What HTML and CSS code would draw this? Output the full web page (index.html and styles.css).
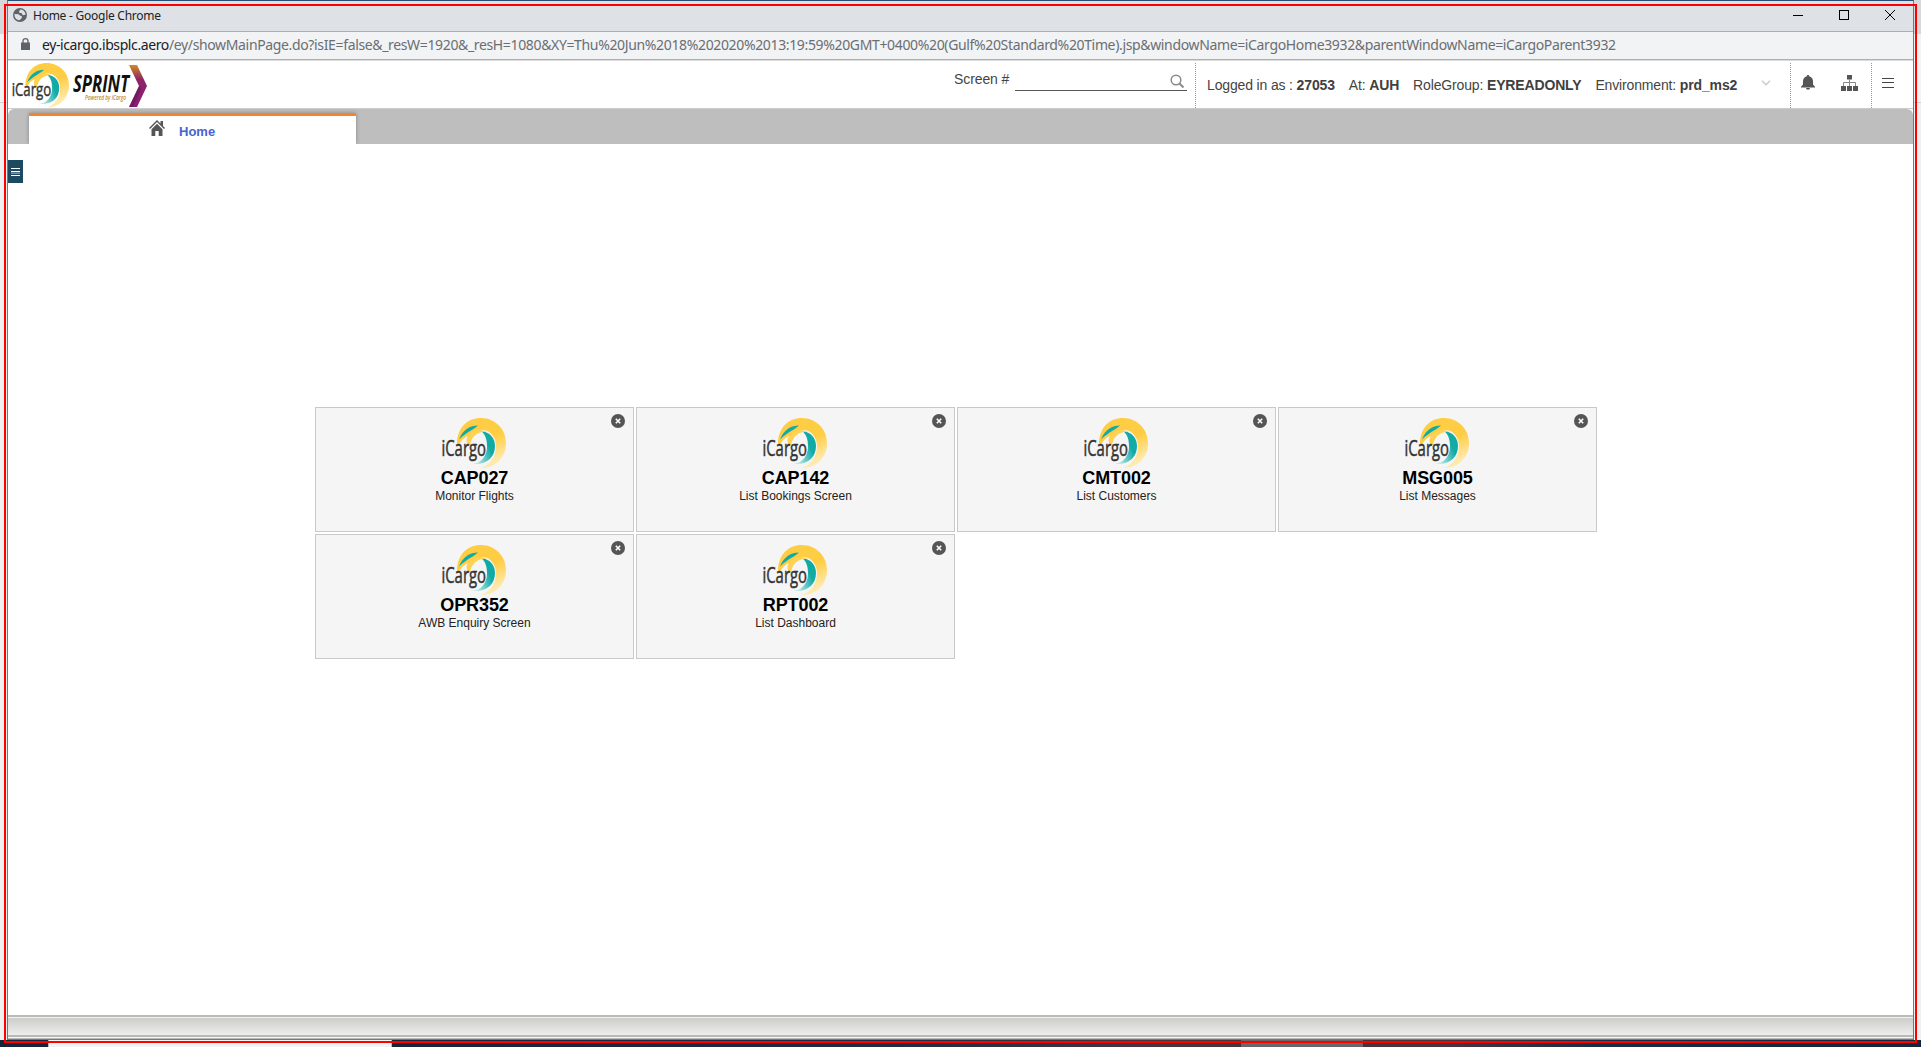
FILE: index.html
```html
<!DOCTYPE html>
<html lang="en">
<head>
<meta charset="utf-8">
<title>Home</title>
<link rel="stylesheet" href="styles.css">
</head>
<body>
<svg class="defs" width="0" height="0">
  <defs>
    <linearGradient id="sun" x1="0" y1="0" x2="0.35" y2="1"><stop offset="0.55" stop-color="#ffcd43"/><stop offset="1" stop-color="#ffe9ad"/></linearGradient>
    <linearGradient id="sea" x1="1" y1="0" x2="0" y2="0.6"><stop offset="0.4" stop-color="#12aaa5"/><stop offset="1" stop-color="#b5e6e4"/></linearGradient>
    <linearGradient id="chev" x1="0" y1="0" x2="0" y2="1"><stop offset="0" stop-color="#d08a25"/><stop offset="0.35" stop-color="#8d2467"/><stop offset="1" stop-color="#8b1c75"/></linearGradient>
    <symbol id="icargo" viewBox="0 0 63 50" overflow="visible">
      <path d="M14 26C14 10 24 0 38 0c14 0 25 11 25 25 0 15-11 25-25 25 9-3 15-11 15-22 0-8-5-15-12-16-8-1-13 5-15 14-3-1-3-5-1-8-5 2-7 5-9 9z" fill="url(#sun)"/>
      <path d="M35 7.500c-8 0-15 4-19 14 4-4 10-8 12-9 3-2 5-3 7-5z" fill="#12aaa5"/>
      <path d="M38 13c9 1 14 7 14 15 0 11-8 19-22 18 8-1 14-8 14-17 0-7-1-12-6-16z" fill="url(#sea)"/>
      <path d="M24 27c-1-9 5-15 12-15 4 0 6 1 8 2-9-1-15 4-17 13z" fill="#ffd253"/>
      <text x="-1.500" y="37.500" textLength="44.500" lengthAdjust="spacingAndGlyphs" class="logo-word">iCargo</text>
    </symbol>
    <symbol id="close" viewBox="0 0 14 14"><circle cx="7" cy="7" r="7" fill="#555"/><path d="M4.800 4.800l4.400 4.400m0-4.400l-4.400 4.400" stroke="#fff" stroke-width="1.600"/></symbol>
  </defs>
</svg>
<div class="window">
  <header class="titlebar">
    <svg class="globe" width="14" height="14" viewBox="0 0 14 14"><circle cx="7" cy="7" r="7" fill="#5f6368"/><path d="M1.500 6l4 .3 1.800 1.500 1.700.4-.5 2.300-2.200 1.700C3 12 1.300 9 1.500 6zM7.500 1.500L6 3.200l.4 1.600 2.400.4 1 2 2.700-.5c0-2.500-2-5-5-5.200z" fill="#dee1e6"/></svg>
    <span class="title">Home - Google Chrome</span>
    <svg class="controls" width="104" height="14" viewBox="0 0 104 14" fill="none" stroke="#000"><path d="M0 6.500h10"/><rect x="46.500" y="1.500" width="9" height="9"/><path d="M92 1l10 10m0-10L92 11"/></svg>
  </header>
  <div class="urlbar">
    <svg width="9" height="12" viewBox="0 0 9 12"><path d="M0 4.500h9V12H0z" fill="#5f6368"/><path d="M2 5V3a2.500 2.400 0 015 0v2" fill="none" stroke="#5f6368" stroke-width="1.300"/></svg>
    <span class="url"><span class="host">ey-icargo.ibsplc.aero</span>/ey/showMainPage.do?isIE=false&amp;_resW=1920&amp;_resH=1080&amp;XY=Thu%20Jun%2018%202020%2013:19:59%20GMT+0400%20(Gulf%20Standard%20Time).jsp&amp;windowName=iCargoHome3932&amp;parentWindowName=iCargoParent3932</span>
  </div>
  <div class="appbar">
    <svg class="brand" width="136" height="46" viewBox="0 0 136 46">
      <use href="#icargo" x="1" y="1" width="56" height="44.500"/>
      <text x="61" y="30" textLength="56" lengthAdjust="spacingAndGlyphs" class="sprint">SPRINT</text>
      <text x="73" y="38" textLength="41" lengthAdjust="spacingAndGlyphs" class="powered">Powered by iCargo</text>
      <path d="M117 3h8l10 21-10 21h-8l10-21z" fill="url(#chev)"/><path d="M127 24l2 3-8 18h-4z" fill="#5c1350" opacity=".5"/>
    </svg>
    <div class="search"><label>Screen #</label><span class="field"><svg width="15" height="15" viewBox="0 0 15 15" fill="none" stroke="#8a8a8a"><circle cx="6" cy="6" r="4.800" stroke-width="1.500"/><path d="M9.500 9.500l4 4" stroke-width="2"/></svg></span></div>
    <div class="session">
      <span>Logged in as : <b>27053</b></span><span>At: <b>AUH</b></span><span>RoleGroup: <b>EYREADONLY</b></span><span>Environment: <b>prd_ms2</b></span>
      <svg class="down" width="10" height="6" viewBox="0 0 10 6"><path d="M1 .8l4 4 4-4" fill="none" stroke="#ccc" stroke-width="1.500"/></svg>
    </div>
    <div class="tools">
      <svg width="14" height="15" viewBox="0 0 14 15" fill="#555"><path d="M7 0c.8 0 1.200.6 1.200 1.200C10.500 1.800 12 3.700 12 6v3.500l2 2.200v.8H0v-.8l2-2.200V6c0-2.300 1.500-4.200 3.800-4.800C5.800.6 6.200 0 7 0zM5 13h4c0 2.200-4 2.200-4 0z"/></svg>
      <svg width="17" height="16" viewBox="0 0 17 16" fill="#555"><path d="M6 0h5v4.500H6zM0 11h5v5H0zM6 11h5v5H6zM12 11h5v5h-5z"/><path d="M8.500 4v7M2.500 11V7.500h12V11" fill="none" stroke="#888"/></svg>
    </div>
    <div class="menu"><svg width="12" height="10" viewBox="0 0 12 10" stroke="#444"><path d="M0 .5h12M0 4.500h12M0 9.500h12"/></svg></div>
  </div>
  <nav class="tabs"><div class="tab"><svg width="16" height="16" viewBox="0 0 16 16" fill="#555"><path d="M8 0l3.500 3.500V1H14v5l2 2-1 1-7-7-7 7-1-1z"/><path d="M8 3.700l5.500 5.500V16H9.700v-5H6.300v5H2.500V9.200z"/></svg><span>Home</span></div></nav>
  <main class="workspace">
    <div class="drawer"><svg width="9" height="8" viewBox="0 0 9 8" fill="#fff"><path d="M0 0h9v1H0zM0 3h9v1H0zM0 4h9v.3H0zM0 7h9v1H0z"/><path d="M0 5h9v1H0z" opacity=".4"/></svg></div>
    <div class="cards">
      <article class="card"><svg class="close" width="14" height="14"><use href="#close"/></svg><svg width="63" height="50"><use href="#icargo"/></svg><h2>CAP027</h2><p>Monitor Flights</p></article>
      <article class="card"><svg class="close" width="14" height="14"><use href="#close"/></svg><svg width="63" height="50"><use href="#icargo"/></svg><h2>CAP142</h2><p>List Bookings Screen</p></article>
      <article class="card"><svg class="close" width="14" height="14"><use href="#close"/></svg><svg width="63" height="50"><use href="#icargo"/></svg><h2>CMT002</h2><p>List Customers</p></article>
      <article class="card"><svg class="close" width="14" height="14"><use href="#close"/></svg><svg width="63" height="50"><use href="#icargo"/></svg><h2>MSG005</h2><p>List Messages</p></article>
      <article class="card"><svg class="close" width="14" height="14"><use href="#close"/></svg><svg width="63" height="50"><use href="#icargo"/></svg><h2>OPR352</h2><p>AWB Enquiry Screen</p></article>
      <article class="card"><svg class="close" width="14" height="14"><use href="#close"/></svg><svg width="63" height="50"><use href="#icargo"/></svg><h2>RPT002</h2><p>List Dashboard</p></article>
    </div>
  </main>
  <footer class="status"></footer>
</div>
<div class="taskbar"><div class="find"></div><div class="active"></div><div class="clock">1:20 PM</div></div>
<div class="outline"></div>
</body>
</html>
```
FILE: styles.css
```css
* { box-sizing: border-box; }
body { margin: 0; width: 1921px; height: 1047px; overflow: hidden; font-family: "Liberation Sans", Arial, sans-serif; color: #444;
  background: linear-gradient(#d5d7da 0 34px, #f3f3f3 34px 102px, #d0d0d0 102px 103px, #f0f0f0 103px); }
svg { overflow: visible; flex: none; }
.defs { position: absolute; }
.window { margin: 0 7px; width: 1907px; height: 1040px; border: 1px solid #777; border-top-color: #264f78; background: #fff; display: flex; flex-direction: column; }
.titlebar { height: 31px; flex: none; background: #dee1e6; border-bottom: 1px solid #abaeb3; display: flex; padding: 7px 16px 0 5px; }
.title { font: 12px/16px "Noto Sans", sans-serif; color: #222; margin-left: 6px; letter-spacing: -0.25px; }
.controls { margin-left: auto; margin-top: 1px; }
.urlbar { height: 28px; flex: none; background: #f1f3f5; border-bottom: 1px solid #abaeb3; box-shadow: 0 1px #dcdcdc; display: flex; align-items: flex-start; padding: 6px 0 0 13px; }
.url { font: 14px/19px "Noto Sans", sans-serif; color: #6b6e72; margin: -3px 0 0 12px; white-space: nowrap; letter-spacing: -0.353px; }
.host { color: #202124; letter-spacing: -0.4px; }
.appbar { height: 49px; flex: none; display: flex; align-items: flex-start; padding-top: 3px; border-bottom: 1px solid #ccc; }
.brand { margin-left: 4px; margin-top: -1px; }
.logo-word { font: 21px "Open Sans", sans-serif; fill: #333; stroke: #333; stroke-width: .5px; }
.sprint { font: italic 700 23px "Open Sans", sans-serif; fill: #111; }
.powered { font: italic 600 7.5px "Open Sans", sans-serif; fill: #c28c1c; }
.search { margin-left: 806px; display: flex; font-size: 14px; height: 28px; }
.search label { width: 61px; line-height: 32px; white-space: nowrap; letter-spacing: -0.1px; }
.field { width: 172px; height: 28px; border-bottom: 1px solid #555; display: flex; justify-content: flex-end; align-items: flex-end; padding: 0 2px 1px 0; }
.session { margin-left: 8px; height: 45px; width: 595px; border-left: 1px dotted #999; display: flex; gap: 14px; padding: 14px 0 0 11px; font-size: 14px; line-height: 16px; white-space: nowrap; letter-spacing: -0.15px; }
.session b { color: #404040; }
.down { margin: 3px 0 0 10px; }
.tools { height: 45px; width: 81px; border-left: 1px dotted #999; display: flex; gap: 26px; padding: 12px 0 0 10px; }
.menu { height: 45px; border-left: 1px dotted #999; padding-left: 10px; padding-top: 15px; line-height: 0; }
.tabs { height: 35px; flex: none; background: #bebebe; border-radius: 6px 6px 0 0; padding: 4px 0 0 21px; overflow: hidden; }
.tab { width: 327px; height: 31px; background: #fff; border-top: 3px solid #f5842b; box-shadow: 0 0 4px #888; display: flex; padding: 4px 0 0 120px; }
.tab span { color: #4763d2; font: bold 13px/24px "Liberation Sans", Arial, sans-serif; margin-left: 14px; }
.workspace { flex: 1; padding-top: 16px; }
.drawer { width: 15px; height: 23px; background: #1c4a60; padding: 8px 3px; line-height: 0; }
.cards { display: grid; grid-template-columns: repeat(4, 319px); grid-auto-rows: 125px; gap: 2px; margin: 224px 0 0 307px; }
.card { position: relative; background: #f5f5f5; border: 1px solid #c9c9c9; padding: 10px 0 0; display: flex; flex-direction: column; align-items: center; color: #000; }
.close { position: absolute; right: 8px; top: 6px; }
h2 { font-size: 18px; line-height: 20px; margin: 0; letter-spacing: -0.1px; }
p { font-size: 12px; line-height: 14px; margin: 1px 0 0; color: #222; }
.status { height: 24px; flex: none; border-top: 2px solid #b8bab8; background: linear-gradient(#f2f2f2 0 1px, #cdcdca 1px, #ededed 18px, #b8bab8 18px 20px, #f4f4f4 20px 21px, #bbb 21px); }
.taskbar { height: 7px; display: flex; background: linear-gradient(90deg, #16253b 0 400px, #202c45 900px, #48363f 1150px 1450px, #1a2c48 1600px, #16253b); }
.find { width: 344px; margin-left: 48px; background: #f3f3f3; border: 1px solid #bbb; border-width: 0 1px; }
.active { width: 122px; margin-left: 849px; background: #6b6668; }
.clock { margin-left: 453px; width: 48px; height: 7px; overflow: hidden; color: #fff; font: 11px/15px "Noto Sans", sans-serif; padding-top: 3px; white-space: nowrap; }
.outline { position: absolute; left: 4px; top: 4px; width: 1913px; height: 1039px; border: 2px solid #f00; }
```
